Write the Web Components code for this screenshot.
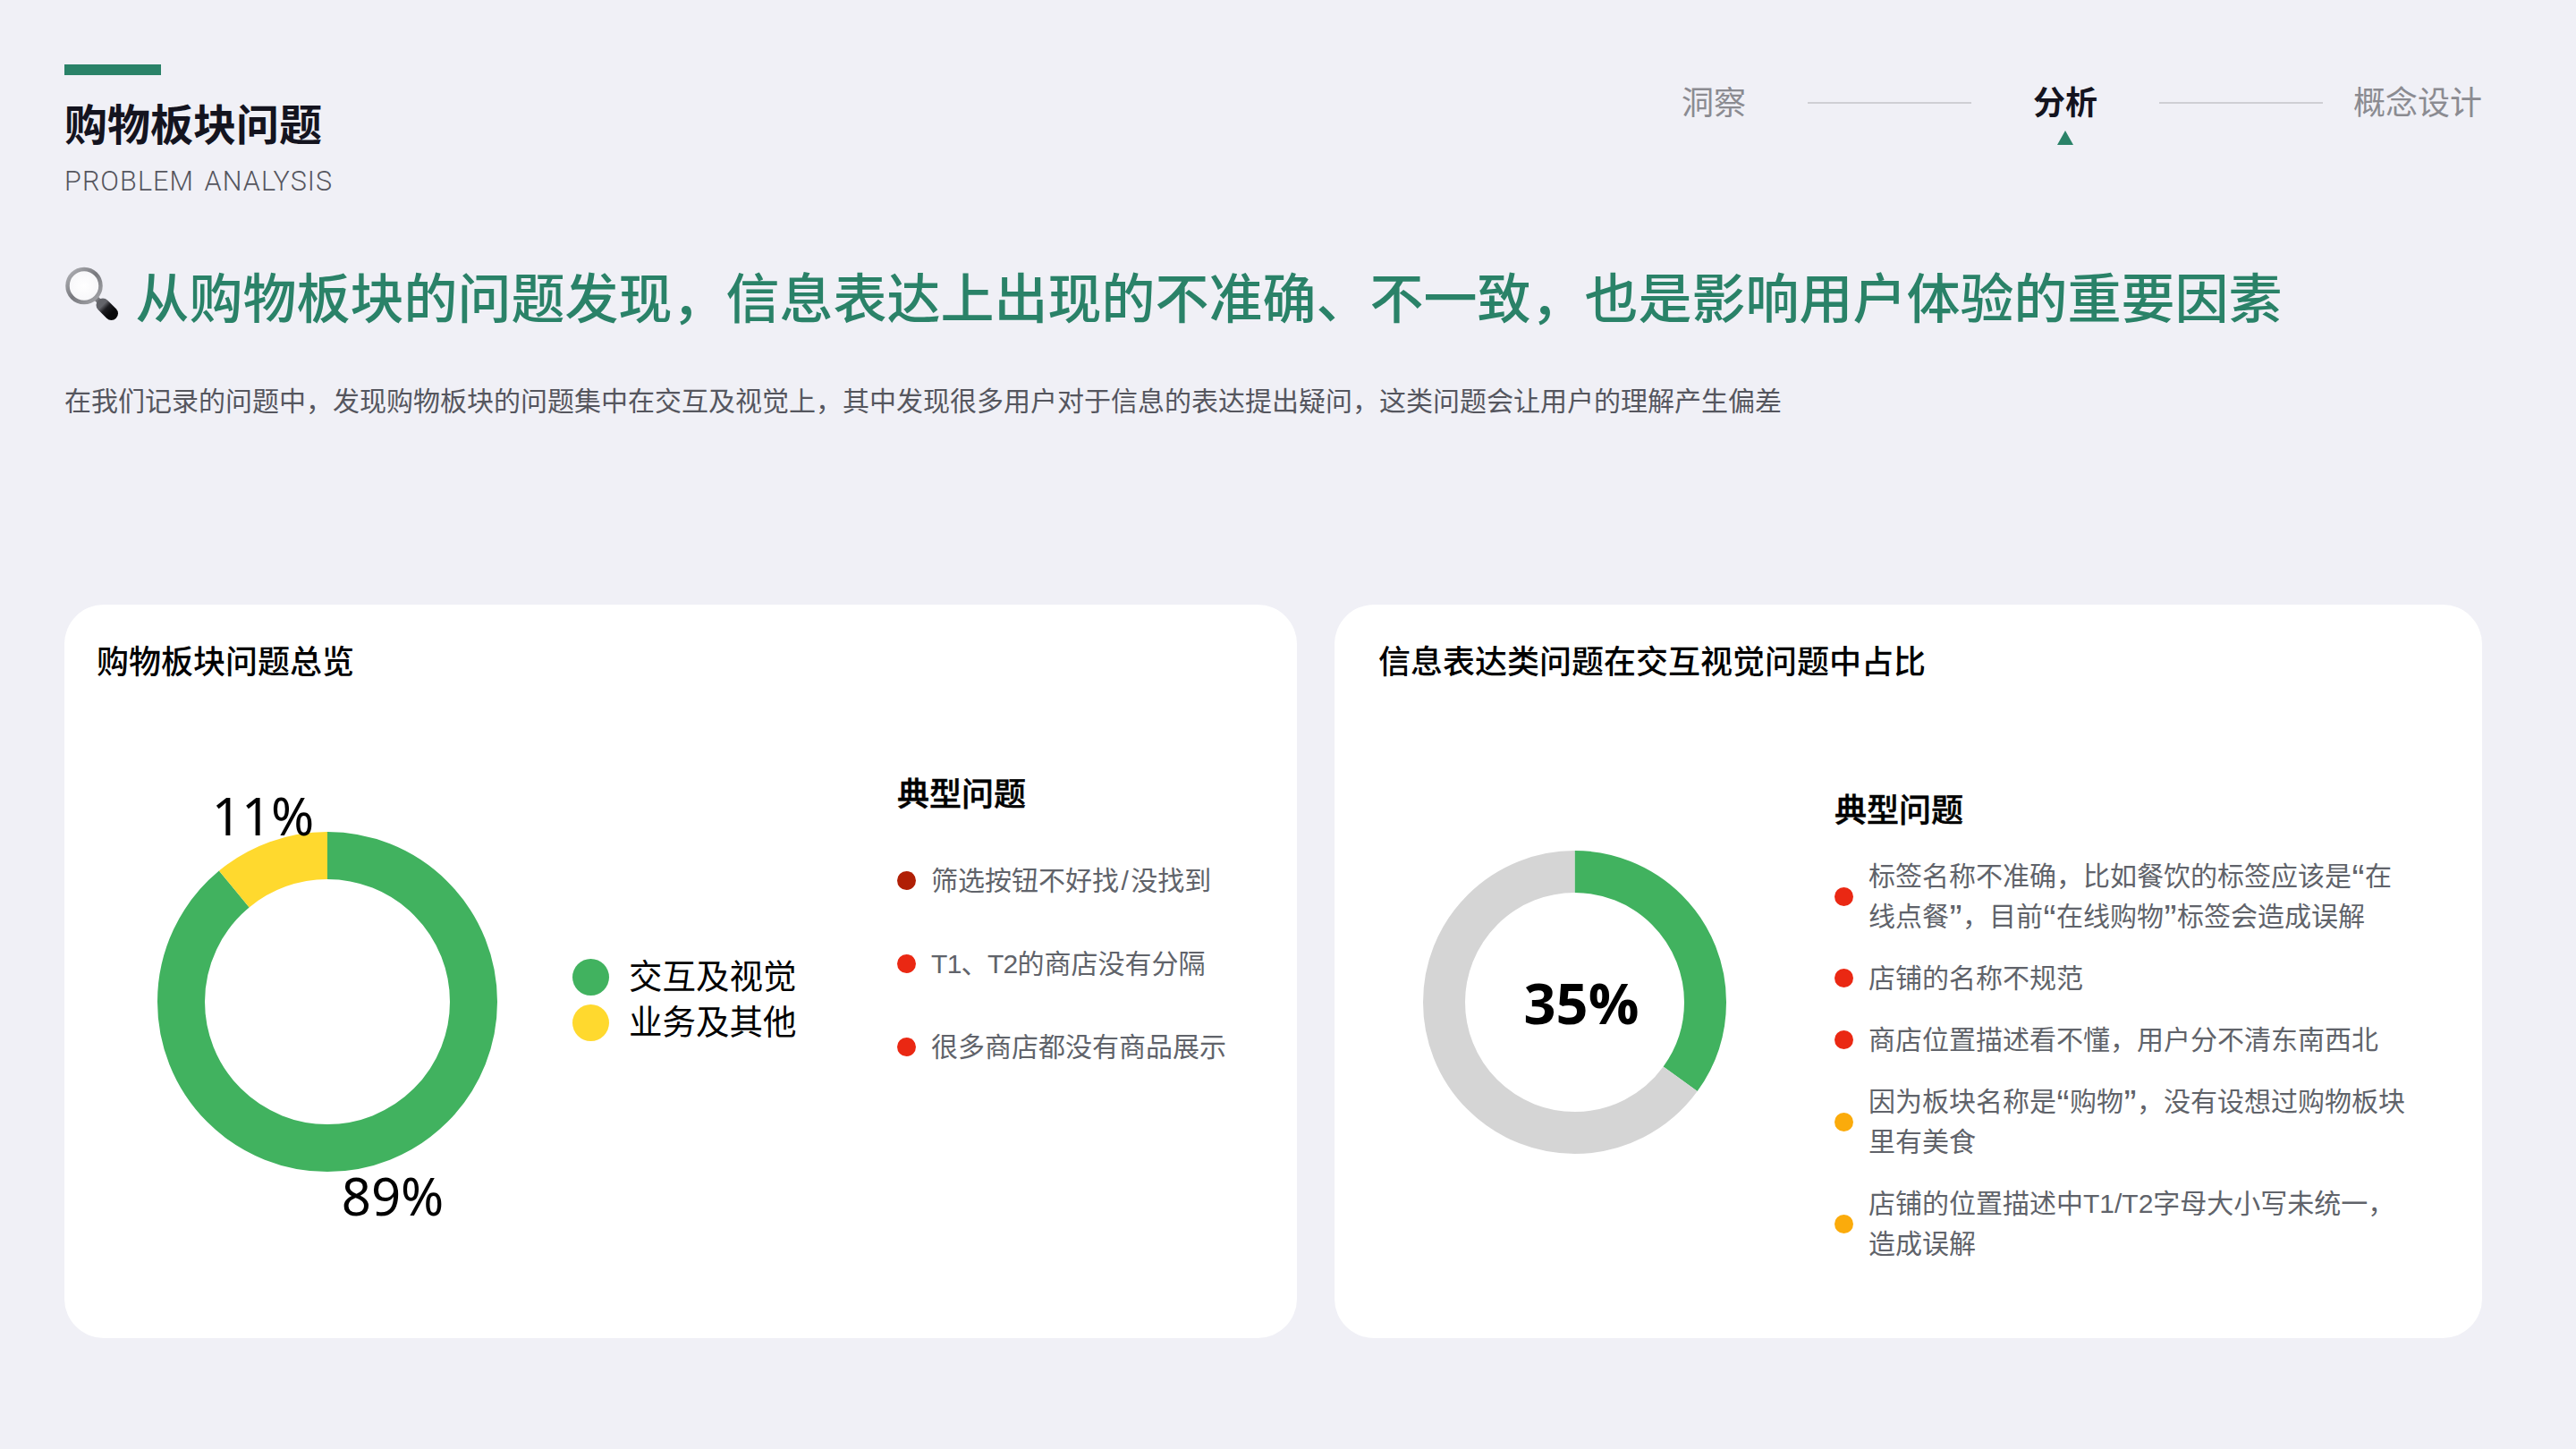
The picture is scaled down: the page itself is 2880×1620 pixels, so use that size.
<!DOCTYPE html>
<html lang="zh-CN">
<head>
<meta charset="utf-8">
<title>购物板块问题</title>
<style>
  html, body { margin: 0; padding: 0; background: #f0f0f6; }
  body { font-family: "Liberation Sans", "Noto Sans CJK SC", sans-serif; }
  /* quotes and latin in the list sit a little wider/tighter than the stack gives */
  .q { display: inline-block; width: 15px; text-align: center; transform: scale(1.4); transform-origin: 50% 38%; }
  .sl { margin: 0 2.5px; }
  .tt { letter-spacing: -.7px; }
</style>
</head>
<body>
<slide-page>
  <page-header slot="header">
    <section-title title="购物板块问题" sub="PROBLEM ANALYSIS"></section-title>
    <step-nav></step-nav>
  </page-header>
  <insight-head slot="insight" text="从购物板块的问题发现，信息表达上出现的不准确、不一致，也是影响用户体验的重要因素">在我们记录的问题中，发现购物板块的问题集中在交互及视觉上，其中发现很多用户对于信息的表达提出疑问，这类问题会让用户的理解产生偏差</insight-head>

  <chart-card slot="cards" title="购物板块问题总览" style="--card-w:1378px;--card-pad:36px">
    <donut-chart size="380" stroke="53" segments="89:#41b25f,11:#ffd92e" style="margin:164px 0 0 68px">
      <chart-label x="118" y="-18">11%</chart-label>
      <chart-label x="263" y="407">89%</chart-label>
    </donut-chart>
    <chart-legend style="margin:306px 0 0 84px">
      <legend-row color="#41b25f">交互及视觉</legend-row>
      <legend-row color="#ffd92e">业务及其他</legend-row>
    </chart-legend>
    <issue-list style="margin:98px 0 0 112px;--head-gap:48px;--item-gap:48px">
      <issue-item color="#b01f05">筛选按钮不好找<span class="sl">/</span>没找到</issue-item>
      <issue-item color="#ea2813"><span class="tt">T1、T2</span>的商店没有分隔</issue-item>
      <issue-item color="#ea2813">很多商店都没有商品展示</issue-item>
    </issue-list>
  </chart-card>

  <chart-card slot="cards" title="信息表达类问题在交互视觉问题中占比" style="--card-w:1283px;--card-pad:49px">
    <donut-chart size="339" stroke="47" segments="35:#41b25f,65:#d5d5d5" style="margin:185px 0 0 50px">
      <chart-label x="177" y="169" bold>35%</chart-label>
    </donut-chart>
    <issue-list style="margin:116px 0 0 121px;--head-gap:25px;--item-gap:24px">
      <issue-item color="#ea2813">标签名称不准确，比如餐饮的标签应该是<span class="q">“</span>在<br>线点餐<span class="q">”</span>，目前<span class="q">“</span>在线购物<span class="q">”</span>标签会造成误解</issue-item>
      <issue-item color="#ea2813">店铺的名称不规范</issue-item>
      <issue-item color="#ea2813">商店位置描述看不懂，用户分不清东南西北</issue-item>
      <issue-item color="#fbab0b">因为板块名称是<span class="q">“</span>购物<span class="q">”</span>，没有设想过购物板块<br>里有美食</issue-item>
      <issue-item color="#fbab0b">店铺的位置描述中T1/T2字母大小写未统一，<br>造成误解</issue-item>
    </issue-list>
  </chart-card>
</slide-page>

<script>
const FONT = '"Liberation Sans", "Noto Sans CJK SC", sans-serif';

// small helper so every element below reads the same
function define(name, css, html, extra) {
  class El extends HTMLElement {
    connectedCallback() {
      if (this.shadowRoot) return;
      this.attachShadow({ mode: 'open' });
      const body = typeof html === 'function' ? html(this) : html;
      this.shadowRoot.innerHTML = `<style>${css}</style>${body}`;
      if (extra) extra(this);
    }
  }
  customElements.define(name, El);
}

define('slide-page', `
  :host { display: flex; flex-direction: column; width: 2880px; height: 1620px; box-sizing: border-box;
    padding: 72px 105px 0 72px; background: #f0f0f6; font-family: ${FONT}; overflow: hidden; }
  .cards { display: flex; gap: 42px; margin-top: 207px; }
`, `<slot name="header"></slot><slot name="insight"></slot><div class="cards"><slot name="cards"></slot></div>`);

define('page-header', `
  :host { display: flex; justify-content: space-between; align-items: flex-start; }
`, `<slot></slot>`);

define('section-title', `
  :host { display: block; }
  .bar { width: 108px; height: 12px; background: #2a8268; }
  h1 { margin: 27px 0 0; font-size: 48px; line-height: 60px; font-weight: 700; color: #14141f; }
  p { margin: 12px 0 0; font-family: Roboto, sans-serif; font-size: 30.5px; line-height: 40px; color: #55565e; font-weight: 300; letter-spacing: 1.1px; word-spacing: 3px; }
`, el => `<div class="bar"></div><h1>${el.getAttribute('title')}</h1><p>${el.getAttribute('sub')}</p>`);

define('step-nav', `
  :host { display: flex; align-items: center; height: 88px; font-size: 36px; line-height: 50px; color: #8b8b91; }
  span { display: block; position: relative; white-space: nowrap; }
  .on { color: #14141f; font-weight: 700; }
  .on::after { content: ""; position: absolute; left: 50%; top: 55px; margin-left: -8.5px;
    border-left: 9.5px solid transparent; border-right: 9.5px solid transparent; border-bottom: 16px solid #2a8268; }
  i { display: block; width: 183px; height: 2px; background: #cfcfd4; margin: -3px 69px 0; }
  i.tight { margin-right: 34px; }
`, `<span>洞察</span><i></i><span class="on">分析</span><i class="tight"></i><span>概念设计</span>`);

define('insight-head', `
  :host { display: block; }
  .row { display: flex; align-items: flex-start; gap: 15.5px; margin-top: 70.5px; height: 84px; }
  svg { width: 64px; height: 64px; flex: none; margin-top: 4.5px; }
  h2 { margin: 0; font-size: 60px; line-height: 84px; font-weight: 500; color: #2a8268; white-space: nowrap; }
  p { margin: 51.5px 0 0; font-size: 30px; line-height: 40px; color: #55565e; white-space: nowrap; }
`, el => `<div class="row">
  <svg viewBox="0 0 64 64" aria-hidden="true">
    <defs>
      <linearGradient id="ring" x1="0" y1="0" x2="1" y2="1">
        <stop offset="0" stop-color="#b4b5b9"/><stop offset=".5" stop-color="#77787d"/><stop offset="1" stop-color="#a9aaae"/>
      </linearGradient>
      <radialGradient id="lens" cx=".5" cy=".5" r=".6">
        <stop offset="0" stop-color="#fff"/><stop offset=".78" stop-color="#f7f7f9"/><stop offset="1" stop-color="#d4d4d9"/>
      </radialGradient>
      <linearGradient id="grip" x1="0" y1="0" x2="1" y2="1">
        <stop offset="0" stop-color="#63646a"/><stop offset=".4" stop-color="#1c1c20"/><stop offset="1" stop-color="#08080a"/>
      </linearGradient>
    </defs>
    <path d="M33 33 L42 42" stroke="#77787c" stroke-width="6"/>
    <path d="M43 43 L52.5 52.5" stroke="url(#grip)" stroke-width="15" stroke-linecap="round" fill="none"/>
    <circle cx="22" cy="21.5" r="18.5" fill="url(#lens)" stroke="url(#ring)" stroke-width="4.5"/>
  </svg>
  <h2>${el.getAttribute('text')}</h2>
</div><p><slot></slot></p>`);

define('chart-card', `
  :host { display: block; width: var(--card-w); height: 820px; box-sizing: border-box; flex: none;
    padding: 40px 0 0 var(--card-pad); background: #fff; border-radius: 44px; }
  h3 { margin: 0; font-size: 36px; line-height: 50px; font-weight: 500; color: #000; }
  .body { display: flex; align-items: flex-start; }
`, el => `<h3>${el.getAttribute('title')}</h3><div class="body"><slot></slot></div>`);

// ring from "value:color" pairs, clockwise from 12 o'clock
define('donut-chart', `
  :host { display: block; position: relative; flex: none; }
  svg { display: block; }
`, el => {
  const size = +el.getAttribute('size'), stroke = +el.getAttribute('stroke');
  const r = (size - stroke) / 2, c = size / 2;
  let at = 0;
  const arcs = el.getAttribute('segments').split(',').map(s => {
    const [v, color] = s.split(':');
    const arc = `<circle cx="${c}" cy="${c}" r="${r}" fill="none" stroke="${color}" stroke-width="${stroke}"
      pathLength="100" stroke-dasharray="${v} ${100 - v}" stroke-dashoffset="${-at}" transform="rotate(-90 ${c} ${c})"/>`;
    at += +v;
    return arc;
  }).join('');
  return `<svg width="${size}" height="${size}" viewBox="0 0 ${size} ${size}">${arcs}</svg><slot></slot>`;
});

define('chart-label', `
  :host { position: absolute; transform: translate(-50%, -50%); font-family: "Noto Sans", sans-serif;
    font-size: 58px; line-height: 1; color: #000; white-space: nowrap; }
  :host([bold]) { font-family: "Open Sans", sans-serif; font-weight: 700; font-size: 63px; }
`, `<slot></slot>`, el => {
  el.style.left = el.getAttribute('x') + 'px';
  el.style.top = el.getAttribute('y') + 'px';
});

define('chart-legend', `
  :host { display: flex; flex-direction: column; gap: 10px; flex: none; width: 251px; }
`, `<slot></slot>`);

define('legend-row', `
  :host { display: flex; align-items: center; gap: 22px; height: 41px; font-size: 37.5px; line-height: 41px; color: #000; white-space: nowrap; }
  b { width: 41px; height: 41px; border-radius: 50%; flex: none; }
`, el => `<b style="background:${el.getAttribute('color')}"></b><slot></slot>`);

define('issue-list', `
  :host { display: block; flex: none; }
  h4 { margin: 0 0 var(--head-gap); font-size: 36px; line-height: 50px; font-weight: 500; -webkit-text-stroke: .5px #000; color: #000; }
  .items { display: flex; flex-direction: column; gap: var(--item-gap); }
`, `<h4>典型问题</h4><div class="items"><slot></slot></div>`);

define('issue-item', `
  :host { display: flex; align-items: center; gap: 17px; font-size: 30px; line-height: 45px; color: #60636a; white-space: nowrap; }
  b { width: 21px; height: 21px; border-radius: 50%; flex: none; }
`, el => `<b style="background:${el.getAttribute('color')}"></b><div><slot></slot></div>`);
</script>
</body>
</html>
